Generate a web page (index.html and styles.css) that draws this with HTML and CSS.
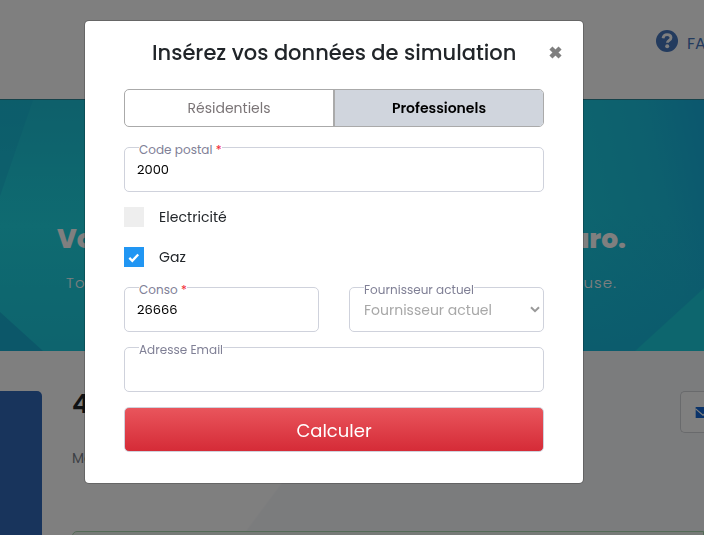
FILE: index.html
```html
<!DOCTYPE html>
<html lang="fr">
<head>
<meta charset="utf-8">
<title>Simulation</title>
<link rel="stylesheet" href="styles.css">
</head>
<body>
<div class="page">
  <header class="topbar">
    <svg class="help" viewBox="0 0 22 22"><circle cx="11" cy="11" r="11" fill="#4676bd"/><path d="M7 8.2C7.4 5.7 9 4.7 11.1 4.7c2.3 0 3.9 1.3 3.9 3.1 0 2.7-3.6 2.6-3.6 5" fill="none" stroke="#fff" stroke-width="2.8"/><circle cx="11.2" cy="16.3" r="2" fill="#fff"/></svg>
    <span class="faq">FA</span>
  </header>
  <section class="banner">
    <svg class="facets" viewBox="0 0 704 251" preserveAspectRatio="none">
      <defs>
        <linearGradient id="seaL" x1="0" y1="0" x2="0" y2="1"><stop offset="0" stop-color="#1cc0d6"/><stop offset=".5" stop-color="#1ed6e2"/><stop offset="1" stop-color="#1cc8dc"/></linearGradient>
        <linearGradient id="seaR" x1="0" y1=".4" x2="1" y2="0"><stop offset="0" stop-color="#1acade"/><stop offset=".6" stop-color="#1abfdc"/><stop offset="1" stop-color="#18aedc"/></linearGradient>
        <linearGradient id="low" x1="0" y1="0" x2="0" y2="1"><stop offset=".45" stop-color="#18b4da" stop-opacity="0"/><stop offset="1" stop-color="#18b4da" stop-opacity=".8"/></linearGradient>
      </defs>
      <rect width="352" height="251" fill="url(#seaL)"/>
      <rect x="352" width="352" height="251" fill="#1acade"/>
      <rect x="570" width="134" height="251" fill="url(#seaR)"/>
      <rect x="570" width="134" height="251" fill="url(#low)"/>
      <path d="M0 0H33L0 96Z" fill="#18b4d6" opacity=".55"/>
      <path d="M0 212L43 251H0Z" fill="#18aad0" opacity=".85"/>
      <path d="M704 188L635 251H704Z" fill="#1accdc"/>
    </svg>
    <h1 class="headline"><span>Vo</span><span>euro.</span></h1>
    <p class="tagline"><span>To</span><span>use.</span></p>
  </section>
  <main class="content">
    <aside class="card"></aside>
    <div class="offer">
      <div class="offer-head"><strong class="count">4</strong><div class="mail"><svg viewBox="0 0 16 12"><path d="M0 0H16V12H0Z" fill="#1567d4"/><path d="M0 2L8 9L16 2" fill="none" stroke="#fff" stroke-width="1.3"/></svg></div></div>
      <p class="note">Me</p>
      <div class="result"></div>
    </div>
  </main>
</div>
<div class="backdrop">
  <form class="modal">
    <div class="modal-head">
      <h2 class="title">Insérez vos données de simulation</h2>
      <svg class="close" viewBox="0 0 12 12"><path d="M1.8 1.8L10.2 10.2M10.2 1.8L1.8 10.2" stroke="#7f7f7f" stroke-width="4"/></svg>
    </div>
    <div class="tabs"><span class="tab">Résidentiels</span><span class="tab active">Professionels</span></div>
    <div class="field"><span class="label">Code postal <b>*</b></span><span class="value">2000</span></div>
    <div class="check"><span class="box"></span><span>Electricité</span></div>
    <div class="check"><span class="box on"><svg viewBox="0 0 20 20"><path d="M5.3 10.9L8.3 13.8L14.2 7.5" fill="none" stroke="#fff" stroke-width="2.3"/></svg></span><span>Gaz</span></div>
    <div class="pair">
      <div class="field"><span class="label">Conso <b>*</b></span><span class="value">26666</span></div>
      <div class="field"><span class="label">Fournisseur actuel</span><span class="placeholder">Fournisseur actuel</span><svg class="chevron" viewBox="0 0 10 7"><path d="M1 1.2L5 5.2L9 1.2" fill="none" stroke="#999" stroke-width="2"/></svg></div>
    </div>
    <div class="field"><span class="label">Adresse Email</span></div>
    <button class="submit" type="button">Calculer</button>
  </form>
</div>
</body>
</html>
```
FILE: styles.css
```css
* { box-sizing: border-box; }
body { margin: 0; width: 704px; height: 535px; overflow: hidden; font-family: Poppins, Inter, "Liberation Sans", sans-serif; color: #212529; }
h1, h2, p { margin: 0; }
svg { display: block; }
.page { height: 535px; overflow: hidden; background: linear-gradient(126.7deg, #fff 0 58.1%, #f7f8fb 58.3%); }
.topbar { height: 100px; display: flex; align-items: flex-start; padding: 30px 0 0 656px; background: #fff; border-bottom: 1px solid #2b8594; gap: 9px; }
.help { width: 22px; height: 22px; flex: none; }
.faq { font-size: 16px; line-height: 20px; padding-top: 4px; color: #4676bd; }
.banner { position: relative; height: 251px; color: #fff; padding-top: 119px; }
.facets { position: absolute; inset: 0; width: 704px; height: 251px; }
.headline { position: relative; display: flex; justify-content: space-between; margin: 0 78px 0 57px; font-size: 26.5px; line-height: 40px; font-weight: 800; }
.tagline { position: relative; display: flex; justify-content: space-between; margin: 14px 87px 0 66px; font-size: 15px; line-height: 20px; letter-spacing: 1.1px; font-weight: 300; }
.content { display: flex; padding-top: 40px; gap: 30px; }
.card { width: 42px; height: 160px; background: #3068b8; border-radius: 0 5px 0 0; }
.offer { flex: 1; }
.offer-head { display: flex; justify-content: space-between; height: 42px; }
.count { font-size: 26px; line-height: 27px; font-weight: 600; }
.mail { width: 24px; height: 42px; border: 1px solid #d2d4d8; border-right: 0; border-radius: 5px 0 0 5px; background: #fff; padding: 15px 0 0 14px; overflow: hidden; }
.mail svg { width: 16px; height: 11px; }
.note { margin-top: 15px; font-size: 14px; line-height: 20px; color: #7a8089; }
.result { margin-top: 63px; height: 30px; border: 1px solid #a9d6ae; border-radius: 5px 0 0; background: #edf5ee; }
.backdrop { position: fixed; inset: 0; background: rgba(0,0,0,.5); padding: 20px 0 0 84px; }
.modal { width: 500px; height: 464px; border: 1px solid rgba(0,0,0,.2); border-radius: 5px; background: #fff; background-clip: padding-box; padding: 0 39px; }
.modal-head { height: 68px; display: flex; align-items: center; justify-content: space-between; margin-right: -18px; padding: 0 0 5px 28px; }
.title { font-size: 21px; font-weight: 500; line-height: 30px; white-space: nowrap; }
.close { width: 13px; height: 13px; margin-right: 0; }
.tabs { display: grid; grid-template-columns: 1fr 1fr; height: 38px; border: 1px solid #aaa; border-radius: 5px; overflow: hidden; margin-bottom: 20px; }
.tab { display: grid; place-items: center; font-size: 14px; color: #7b7577; border-right: 1px solid #aaa; }
.active { background: #d0d5dd; color: #000; font-weight: 600; border-left: 1px solid #aaa; border-right: 0; }
.field { position: relative; height: 45px; border: 1px solid #cfd2dc; border-radius: 5px; margin-bottom: 15px; padding: 13px 0 0 12px; }
.label { position: absolute; left: 14px; top: -8px; background: #fff; color: #808096; font-size: 12px; line-height: 20px; white-space: nowrap; height: 19px; letter-spacing: .02px; }
.label b { font-weight: 400; color: #f11e35; }
.value { display: block; font-size: 13px; line-height: 18px; color: #000; }
.placeholder { display: block; padding-left: 2px; font-size: 14px; line-height: 18px; color: #a8a8a8; }
.check { display: flex; align-items: center; gap: 15px; height: 20px; font-size: 14px; letter-spacing: .05px; margin-bottom: 20px; }
.box { width: 20px; height: 20px; background: #eee; }
.on { background: #2196f3; }
.pair { display: grid; grid-template-columns: 195px 195px; gap: 30px; }
.chevron { position: absolute; right: 3px; top: 18px; width: 10px; height: 7px; }
.submit { display: block; width: 100%; height: 45px; padding: 2px 0 0; border: 1px solid #cfd2dc; border-radius: 5px; background: linear-gradient(#e9555c, #d52b37); color: #fff; font: 400 18px Poppins, Inter, sans-serif; }
```
